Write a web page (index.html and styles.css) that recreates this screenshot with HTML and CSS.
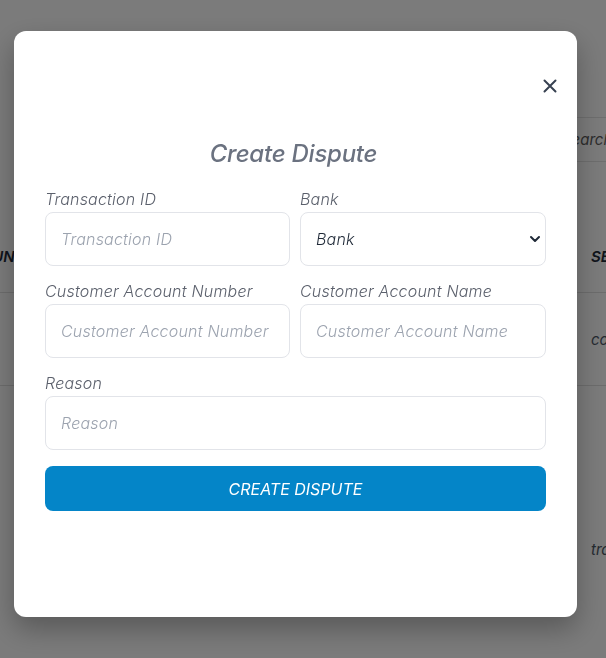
FILE: index.html
```html
<!DOCTYPE html>
<html lang="en">
<head>
<meta charset="utf-8">
<title>Create Dispute</title>
<link rel="stylesheet" href="styles.css">
</head>
<body>
<div class="page">
  <div class="toolbar">
    <div class="search">Search</div>
  </div>
  <div class="table">
    <div class="row head">
      <span class="cell-left">AMOUNT</span>
      <span class="cell-right">SESSION</span>
    </div>
    <div class="row r1">
      <span class="cell-left">2000</span>
      <span class="cell-right">completed</span>
    </div>
    <div class="row r2">
      <span class="cell-left">5000</span>
      <span class="cell-right">transfer</span>
    </div>
  </div>
</div>

<div class="overlay">
  <div class="modal">
    <div class="modal-head">
      <button class="close" aria-label="Close">
        <svg width="14" height="14" viewBox="0 0 14 14" fill="none" stroke="#374151" stroke-width="2" stroke-linecap="round"><path d="M1.5 1.5L12.5 12.5M12.5 1.5L1.5 12.5"/></svg>
      </button>
    </div>
    <h2 class="title">Create Dispute</h2>
    <form class="form">
      <div class="grid">
        <label class="field">
          <span class="label">Transaction ID</span>
          <input class="input" type="text" placeholder="Transaction ID">
        </label>
        <label class="field">
          <span class="label">Bank</span>
          <span class="select-wrap">
            <select class="input select">
              <option>Bank</option>
            </select>
            <svg class="chevron" width="12" height="8" viewBox="0 0 12 8" fill="none" stroke="#1f2937" stroke-width="2" stroke-linecap="round" stroke-linejoin="round"><path d="M2 2l4 4 4-4"/></svg>
          </span>
        </label>
        <label class="field">
          <span class="label">Customer Account Number</span>
          <input class="input" type="text" placeholder="Customer Account Number">
        </label>
        <label class="field">
          <span class="label">Customer Account Name</span>
          <input class="input" type="text" placeholder="Customer Account Name">
        </label>
        <label class="field full">
          <span class="label">Reason</span>
          <input class="input" type="text" placeholder="Reason">
        </label>
      </div>
      <button class="submit" type="button">CREATE DISPUTE</button>
    </form>
  </div>
</div>
</body>
</html>
```

FILE: styles.css
```css
* { box-sizing: border-box; }

html, body {
  margin: 0;
  padding: 0;
  height: 100%;
  overflow: hidden;
}

body {
  background: #f6f6f6;
  font-family: "Inter", "Liberation Sans", sans-serif;
}

/* underlying page */
.page {
  width: 606px;
  height: 658px;
  overflow: hidden;
  font-style: italic;
  color: #4b5563;
  font-size: 15px;
}

.toolbar {
  display: flex;
  justify-content: flex-end;
  padding-top: 117px;
}

.search {
  width: 80px;
  height: 45px;
  margin-right: -28px;
  border-top: 1px solid #dcdcdc;
  border-bottom: 1px solid #dcdcdc;
  border-left: 1px solid #dcdcdc;
  line-height: 43px;
  padding-left: 7px;
  color: #5a5a5a;
  font-size: 15px;
}

.table {
  margin-top: 58px;
}

.row {
  display: flex;
  justify-content: space-between;
  align-items: center;
  border-bottom: 1px solid #d9d9d9;
}

.row.head {
  height: 73px;
  font-weight: 600;
  color: #1f2937;
}

.row.r1 { height: 93px; }

.row.r2 {
  height: 272px;
  align-items: flex-start;
  padding-top: 154px;
  border-bottom: none;
}

.cell-left {
  margin-left: -44px;
}

.cell-right {
  margin-right: -60px;
  width: 75px;
}

/* overlay */
.overlay {
  position: fixed;
  inset: 0;
  background: rgba(0, 0, 0, 0.5);
  padding: 31px 0 0 14px;
}

.modal {
  width: 563px;
  height: 586px;
  background: #ffffff;
  border-radius: 12px;
  box-shadow: 0 12px 28px rgba(0, 0, 0, 0.28);
  padding: 48px 31px 0 31px;
  font-family: "Inter", "Liberation Sans", sans-serif;
  font-style: italic;
}

.modal-head {
  display: flex;
  justify-content: flex-end;
  height: 14px;
}

.close {
  border: none;
  background: none;
  padding: 0;
  margin-right: -11px;
  width: 14px;
  height: 14px;
  display: flex;
  cursor: pointer;
}

.title {
  margin: 45px 0 0 0;
  padding-right: 4px;
  text-align: center;
  font-size: 24px;
  line-height: 32px;
  font-weight: 500;
  color: #6b7280;
  letter-spacing: -0.25px;
}

.form {
  margin-top: 18px;
}

.grid {
  display: grid;
  grid-template-columns: 245px 246px;
  column-gap: 10px;
  row-gap: 14px;
}

.field {
  display: flex;
  flex-direction: column;
  gap: 2px;
}

.field.full {
  grid-column: 1 / -1;
}

.label {
  font-size: 16px;
  line-height: 22px;
  color: #5b606c;
  font-weight: 300;
  letter-spacing: 0.2px;
  white-space: nowrap;
}

.input {
  width: 100%;
  height: 54px;
  border: 1px solid #e2e4e9;
  border-radius: 8px;
  padding: 0 15px;
  font-family: inherit;
  font-style: italic;
  font-size: 16px;
  font-weight: 300;
  letter-spacing: 0.2px;
  color: #374151;
  background: #fff;
  outline: none;
}

.input::placeholder {
  color: #9ca3af;
}

.select-wrap {
  position: relative;
  display: block;
}

.select {
  appearance: none;
  -webkit-appearance: none;
  color: #1f2937;
}

.chevron {
  position: absolute;
  right: 5px;
  top: 23px;
  pointer-events: none;
}

.submit {
  display: block;
  width: 100%;
  height: 45px;
  margin-top: 16px;
  border: none;
  border-radius: 8px;
  background: #0485c8;
  color: #ffffff;
  font-family: inherit;
  font-style: italic;
  font-size: 16px;
  font-weight: 400;
  letter-spacing: 0;
  cursor: pointer;
}
```
